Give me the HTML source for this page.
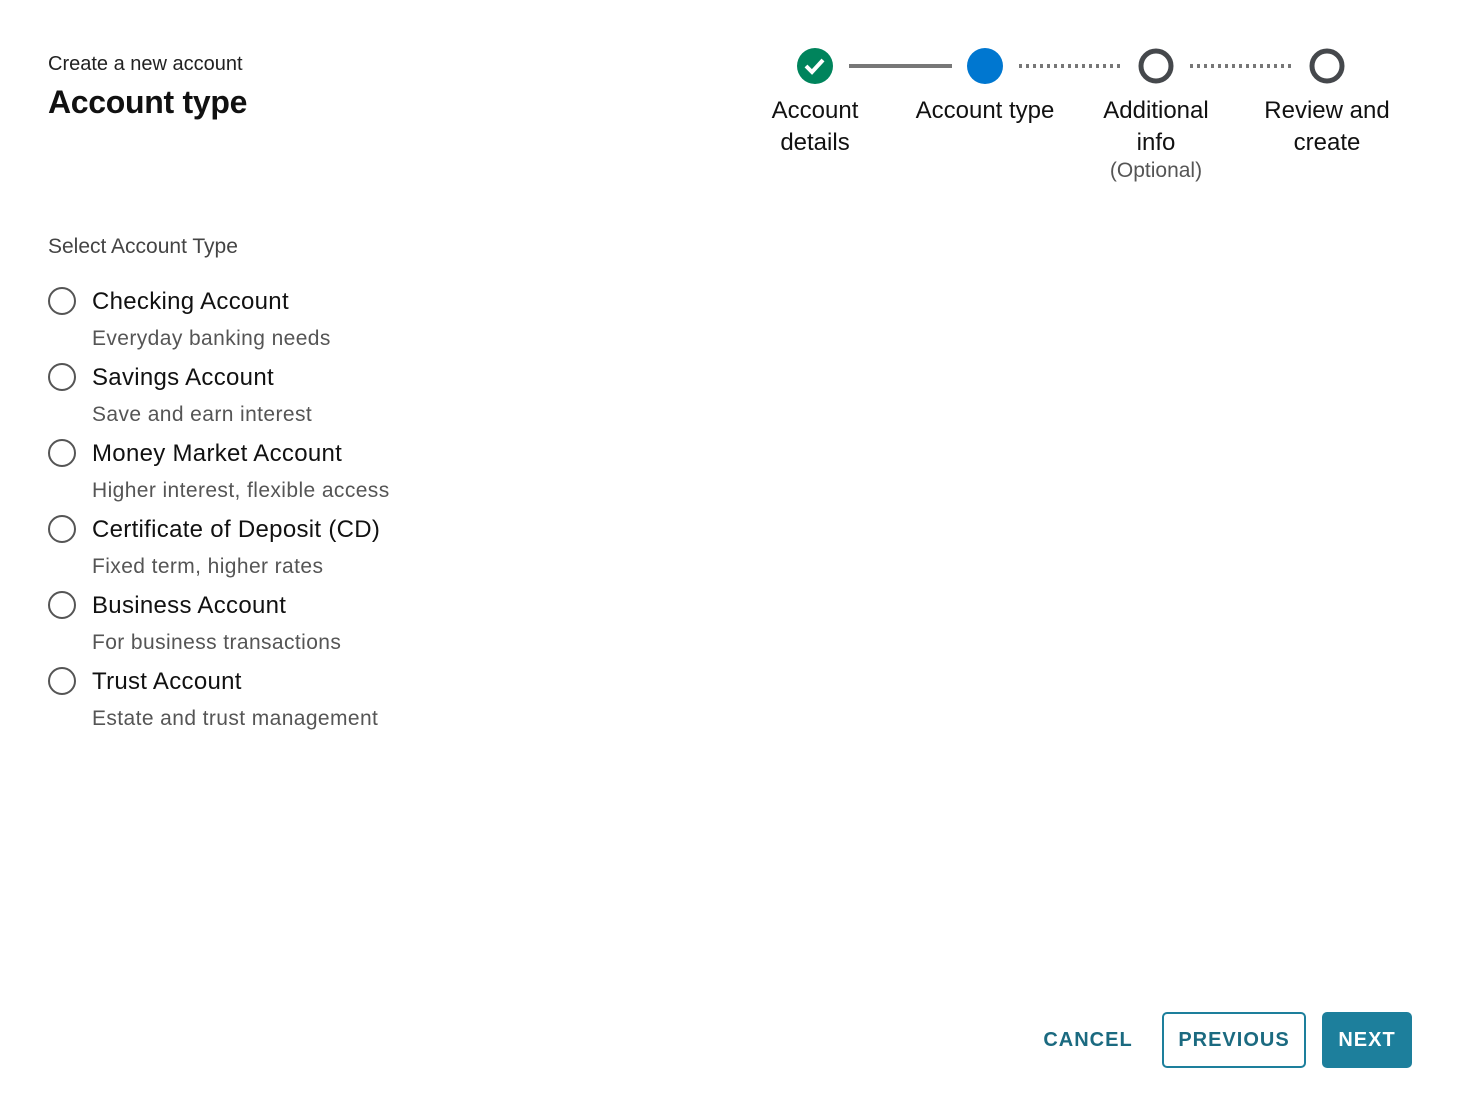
<!DOCTYPE html>
<html><head><style>
body{margin:0;width:1460px;height:1116px;background:#fff;font-family:"Liberation Sans",sans-serif;color:#111;position:relative;overflow:hidden}
.a{position:absolute}
.sub{font-size:20px;color:#222;left:48px;top:53px}
.ttl{font-size:32px;font-weight:bold;left:48px;top:84px;letter-spacing:-0.3px}
.lbl{font-size:24px;text-align:center;line-height:32px;color:#111}
.sel{left:48px;top:235px;font-size:21px;color:#444}
.r{left:48px;width:24px;height:24px;border:2px solid #555;border-radius:50%}
.t{left:92px;font-size:24px;color:#111;letter-spacing:0.3px}
.d{left:92px;font-size:21px;color:#555;letter-spacing:0.4px}
.btn{position:absolute;font-size:20px;font-weight:bold;letter-spacing:1px;color:#1b6a80;display:flex;align-items:center;justify-content:center;box-sizing:border-box;border-radius:5px}
</style></head><body>
<div class="a sub">Create a new account</div>
<div class="a ttl">Account type</div>
<svg class="a" style="left:0;top:0" width="1460" height="100">
<line x1="849" y1="66" x2="952" y2="66" stroke="#777" stroke-width="4"/>
<line x1="1019" y1="66" x2="1122" y2="66" stroke="#777" stroke-width="4" stroke-dasharray="3,4"/>
<line x1="1190" y1="66" x2="1293" y2="66" stroke="#777" stroke-width="4" stroke-dasharray="3,4"/>
<circle cx="815" cy="66" r="18" fill="#00845c"/>
<path d="M806 66 l6 6 l11 -12" fill="none" stroke="#fff" stroke-width="4"/>
<circle cx="985" cy="66" r="18" fill="#0077d0"/>
<circle cx="1156" cy="66" r="15" fill="none" stroke="#45484c" stroke-width="5"/>
<circle cx="1327" cy="66" r="15" fill="none" stroke="#45484c" stroke-width="5"/>
</svg>
<div class="a lbl" style="left:745px;top:95px;width:140px">Account<br>details</div>
<div class="a lbl" style="left:895px;top:95px;width:180px">Account type</div>
<div class="a lbl" style="left:1076px;top:95px;width:160px">Additional<br>info</div>
<div class="a" style="left:1076px;top:159px;width:160px;text-align:center;font-size:21px;color:#555">(Optional)</div>
<div class="a lbl" style="left:1247px;top:95px;width:160px">Review and<br>create</div>
<div class="a sel">Select Account Type</div>

<div class="a r" style="top:287px"></div><div class="a t" style="top:288px">Checking Account</div><div class="a d" style="top:327px">Everyday banking needs</div>
<div class="a r" style="top:363px"></div><div class="a t" style="top:364px">Savings Account</div><div class="a d" style="top:403px">Save and earn interest</div>
<div class="a r" style="top:439px"></div><div class="a t" style="top:440px">Money Market Account</div><div class="a d" style="top:479px">Higher interest, flexible access</div>
<div class="a r" style="top:515px"></div><div class="a t" style="top:516px">Certificate of Deposit (CD)</div><div class="a d" style="top:555px">Fixed term, higher rates</div>
<div class="a r" style="top:591px"></div><div class="a t" style="top:592px">Business Account</div><div class="a d" style="top:631px">For business transactions</div>
<div class="a r" style="top:667px"></div><div class="a t" style="top:668px">Trust Account</div><div class="a d" style="top:707px">Estate and trust management</div>

<div class="btn" style="left:1030px;top:1012px;width:116px;height:56px">CANCEL</div>
<div class="btn" style="left:1162px;top:1012px;width:144px;height:56px;border:2px solid #1d7f9c">PREVIOUS</div>
<div class="btn" style="left:1322px;top:1012px;width:90px;height:56px;background:#1d7f9c;color:#fff">NEXT</div>
</body></html>
